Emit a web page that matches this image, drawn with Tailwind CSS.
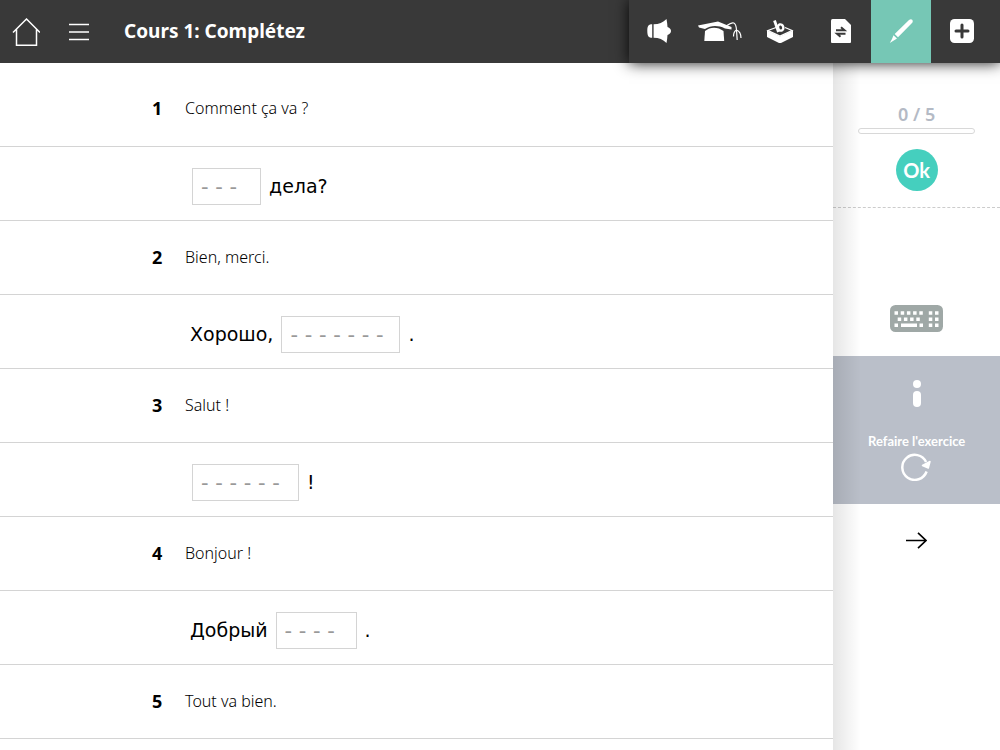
<!doctype html>
<html lang="fr">
<head>
    <meta charset="UTF-8">
    <meta name="viewport" content="width=device-width, initial-scale=1.0">
    <title>Cours 1: Complétez</title>
    <script src="https://cdn.jsdelivr.net/npm/@tailwindcss/browser@4"></script>
</head>
<body class="min-h-screen flex flex-col overflow-hidden bg-white text-black font-['Noto_Sans','Open_Sans',sans-serif]">
<header class="relative z-20 h-[63px] flex items-center bg-[#393939] text-white">
    <a href="#" aria-label="Accueil" class="ml-3">
        <svg class="w-7 h-7" viewBox="0 0 28 28" fill="none" stroke="currentColor" stroke-width="1.5">
            <path d="M1 14.5 14.5 1 28 14.500M4.500 11.500V27.200h20V11.500"/>
        </svg>
    </a>
    <button type="button" aria-label="Menu" class="ml-7">
        <svg class="w-6 h-6" viewBox="0 0 24 24" stroke="currentColor" stroke-width="1.6">
            <path d="M1 4.500h20M1 12h20M1 19.500h20"/>
        </svg>
    </button>
    <h1 class="ml-8 text-[19px] font-bold">Cours 1: Complétez</h1>
    <nav class="ml-auto h-full pr-2 flex bg-[#393939] shadow-[0_0_14px_rgba(0,0,0,0.9)]">
        <button type="button" aria-label="Audio" class="w-[60px] pb-0.5 flex items-center justify-center">
            <svg class="w-6 h-6" viewBox="0 0 24 24" fill="currentColor">
                <path d="M5.200 5.300v13.400C1.800 18.700.3 17.500.3 12s1.500-6.700 4.900-6.700zM6.600 5.300C12 5.300 16 3.500 19.500 0q.8 4 1 8 3.500 1.500 3.500 4t-3.500 4q-.2 4-1 8C16 20.500 12 18.700 6.600 18.700z"/>
            </svg>
        </button>
        <button type="button" aria-label="Leçon" class="w-[61px] pb-0.5 flex items-center justify-center">
            <svg class="w-11 h-6" viewBox="0 0 44 24" fill="currentColor">
                <path d="M0 6.500 20 2.500l13.500 5.500v2.500L27 9.500c-7-3.300-14-3.300-20 .5L1 8.500z"/>
                <path d="M7 12c5-4.500 13-4.500 18.500 0l.7 10H6.300z"/>
                <path d="M29 6.500c6-4.500 9-3.500 9.500 4.500M38.500 11c-2 1-3 3-3 6.500M38.500 11l.7 10M38.500 11c2.500 1 4.500 3.500 4.500 8" fill="none" stroke="currentColor" stroke-width="1.200"/>
            </svg>
        </button>
        <button type="button" aria-label="Boîte à outils" class="w-[60px] pb-0.5 flex items-center justify-center">
            <svg class="w-7 h-6" viewBox="0 0 28 24" fill="currentColor">
                <path d="M1 11.500 14 17.500 27 11.500V18L14 24.500 1 18z"/>
                <path d="M10 8.500 2 11.500l12 5.700 12-5.700-7-3" fill="none" stroke="currentColor" stroke-width="1.300"/>
                <path d="M8.500 1.500 12.500 13" fill="none" stroke="currentColor" stroke-width="2.800"/>
                <ellipse cx="14.700" cy="8.500" rx="2.600" ry="3.200" transform="rotate(-18 14.700 8.500)" fill="none" stroke="currentColor" stroke-width="2.400"/>
            </svg>
        </button>
        <button type="button" aria-label="Traduction" class="w-[61px] pb-0.5 flex items-center justify-center">
            <svg class="w-5 h-6" viewBox="0 0 20 24">
                <path d="M1.500 0H14l6 6v17q0 1-1 1H1q-1 0-1-1V1.500Q0 0 1.500 0z" fill="currentColor"/>
                <path d="M5 11.200h8.500L10 8.200M14.500 14.700H6L9.500 17.700" fill="none" stroke="#393939" stroke-width="2"/>
            </svg>
        </button>
        <button type="button" aria-label="Exercices" class="w-[60px] pb-0.5 flex items-center justify-center bg-[#76c7b5]">
            <svg class="w-6 h-6" viewBox="0 0 24 24" fill="currentColor">
                <path d="M20 1q2-1.500 3.200-.2T23 4L9 18.300 5.700 15zM4.500 16.300 8 19.500l-2 1.300L.8 24 3 20z"/>
            </svg>
        </button>
        <button type="button" aria-label="Ajouter" class="w-[61px] pb-0.5 flex items-center justify-center">
            <svg class="w-6 h-6" viewBox="0 0 24 24">
                <rect width="24" height="24" rx="4.500" fill="currentColor"/>
                <path d="M12 6v12M6 12h12" stroke="#393939" stroke-width="3" stroke-linecap="round"/>
            </svg>
        </button>
    </nav>
</header>
<div class="flex-1 flex">
    <main class="w-5/6">
        <div class="h-[84px] pt-1.5 pl-[152px] flex items-center border-b border-[#d4d4d4]">
            <span class="w-[33px] text-lg font-bold">1</span><p class="font-light">Comment ça va ?</p>
        </div>
        <div class="h-[74px] pt-1.5 pl-48 flex items-center gap-2 border-b border-[#d4d4d4] text-[19px] font-['DejaVu_Sans',sans-serif]">
            <input type="text" aria-label="Réponse 1" placeholder="- - -" class="w-[69px] h-[37px] px-2 border border-[#d4d4d4] placeholder:text-[21px] placeholder:text-[#999]">
            <span>дела?</span>
        </div>
        <div class="h-[74px] pb-0.5 pl-[152px] flex items-center border-b border-[#d4d4d4]">
            <span class="w-[33px] text-lg font-bold">2</span><p class="font-light">Bien, merci.</p>
        </div>
        <div class="h-[74px] pt-1.5 pl-[190px] flex items-center gap-2 border-b border-[#d4d4d4] text-[19px] font-['DejaVu_Sans',sans-serif]">
            <span>Хорошо,</span>
            <input type="text" aria-label="Réponse 2" placeholder="- - - - - - -" class="w-[119px] h-[37px] px-2 border border-[#d4d4d4] placeholder:text-[21px] placeholder:text-[#999]">
            <span>.</span>
        </div>
        <div class="h-[74px] pb-0.5 pl-[152px] flex items-center border-b border-[#d4d4d4]">
            <span class="w-[33px] text-lg font-bold">3</span><p class="font-light">Salut !</p>
        </div>
        <div class="h-[74px] pt-1.5 pl-48 flex items-center gap-2 border-b border-[#d4d4d4] text-[19px] font-['DejaVu_Sans',sans-serif]">
            <input type="text" aria-label="Réponse 3" placeholder="- - - - - -" class="w-[107px] h-[37px] px-2 border border-[#d4d4d4] placeholder:text-[21px] placeholder:text-[#999]">
            <span>!</span>
        </div>
        <div class="h-[74px] pb-0.5 pl-[152px] flex items-center border-b border-[#d4d4d4]">
            <span class="w-[33px] text-lg font-bold">4</span><p class="font-light">Bonjour !</p>
        </div>
        <div class="h-[74px] pt-1.5 pl-[190px] flex items-center gap-2 border-b border-[#d4d4d4] text-[19px] font-['DejaVu_Sans',sans-serif]">
            <span>Добрый</span>
            <input type="text" aria-label="Réponse 4" placeholder="- - - -" class="w-[81px] h-[37px] px-2 border border-[#d4d4d4] placeholder:text-[21px] placeholder:text-[#999]">
            <span>.</span>
        </div>
        <div class="h-[74px] pb-0.5 pl-[152px] flex items-center border-b border-[#d4d4d4]">
            <span class="w-[33px] text-lg font-bold">5</span><p class="font-light">Tout va bien.</p>
        </div>
    </main>
    <aside class="relative w-1/6 flex flex-col">
        <div class="h-[145px] pt-[38px] flex flex-col items-center border-b border-dashed border-[#ccc]">
            <span class="text-lg leading-[26px] font-semibold text-[#b4bac5]">0 / 5</span>
            <div class="mt-[1px] w-[70%] h-[6px] rounded-full border border-[#d8d8d8]"></div>
            <button type="button" class="mt-[15px] w-[42px] h-[42px] rounded-full bg-[#45cfbe] text-white text-xl font-bold font-['Lato',sans-serif]">Ok</button>
        </div>
        <div class="h-[148px] flex items-end justify-center pb-6">
            <button type="button" aria-label="Clavier">
                <svg class="w-[53px] h-[27px]" viewBox="0 0 53 27">
                    <rect width="53" height="27" rx="5.500" fill="#9fa8a6"/>
                    <path d="M4.500 8h29M38.800 8h10M7.700 14.200h23M38.800 14.200h10M38.800 20.300h10" stroke="#fff" stroke-width="3.500" stroke-dasharray="3.500 2.700"/>
                    <path d="M4.500 20.300H8M11 20.300h16M29.500 20.300H33" stroke="#fff" stroke-width="3.500"/>
                </svg>
            </button>
        </div>
        <div class="h-[148px] pt-6 flex flex-col items-center bg-[#babfc9] text-white">
            <svg class="w-2 h-[27px]" viewBox="0 0 8 27" fill="currentColor">
                <circle cx="4" cy="4" r="4"/><rect y="11" width="8" height="16" rx="4"/>
            </svg>
            <button type="button" class="mt-6 flex flex-col items-center text-[13px] leading-5 font-bold font-['Lato',sans-serif]">
                Refaire l'exercice
                <svg class="mt-0.5 w-8 h-7" viewBox="2 0 32 28">
                    <path d="M27.600 18.500a12.500 12.500 0 1 1-.5-9.500" fill="none" stroke="currentColor" stroke-width="2.500"/>
                    <path d="M23.500 12.500 31 8.500 29.300 15z" fill="currentColor" stroke="currentColor" stroke-width="1.500" stroke-linejoin="round"/>
                </svg>
            </button>
        </div>
        <a href="#" aria-label="Suivant" class="mt-7 mx-auto">
            <svg class="w-[21px] h-[17px]" viewBox="0 0 21 17" fill="none" stroke="currentColor" stroke-width="1.600">
                <path d="M0 8.500h20M12 .8l8 7.700-8 7.700"/>
            </svg>
        </a>
        <div class="absolute inset-y-0 left-0 w-7 pointer-events-none bg-linear-to-r from-black/10 to-transparent"></div>
    </aside>
</div>
</body>
</html>
